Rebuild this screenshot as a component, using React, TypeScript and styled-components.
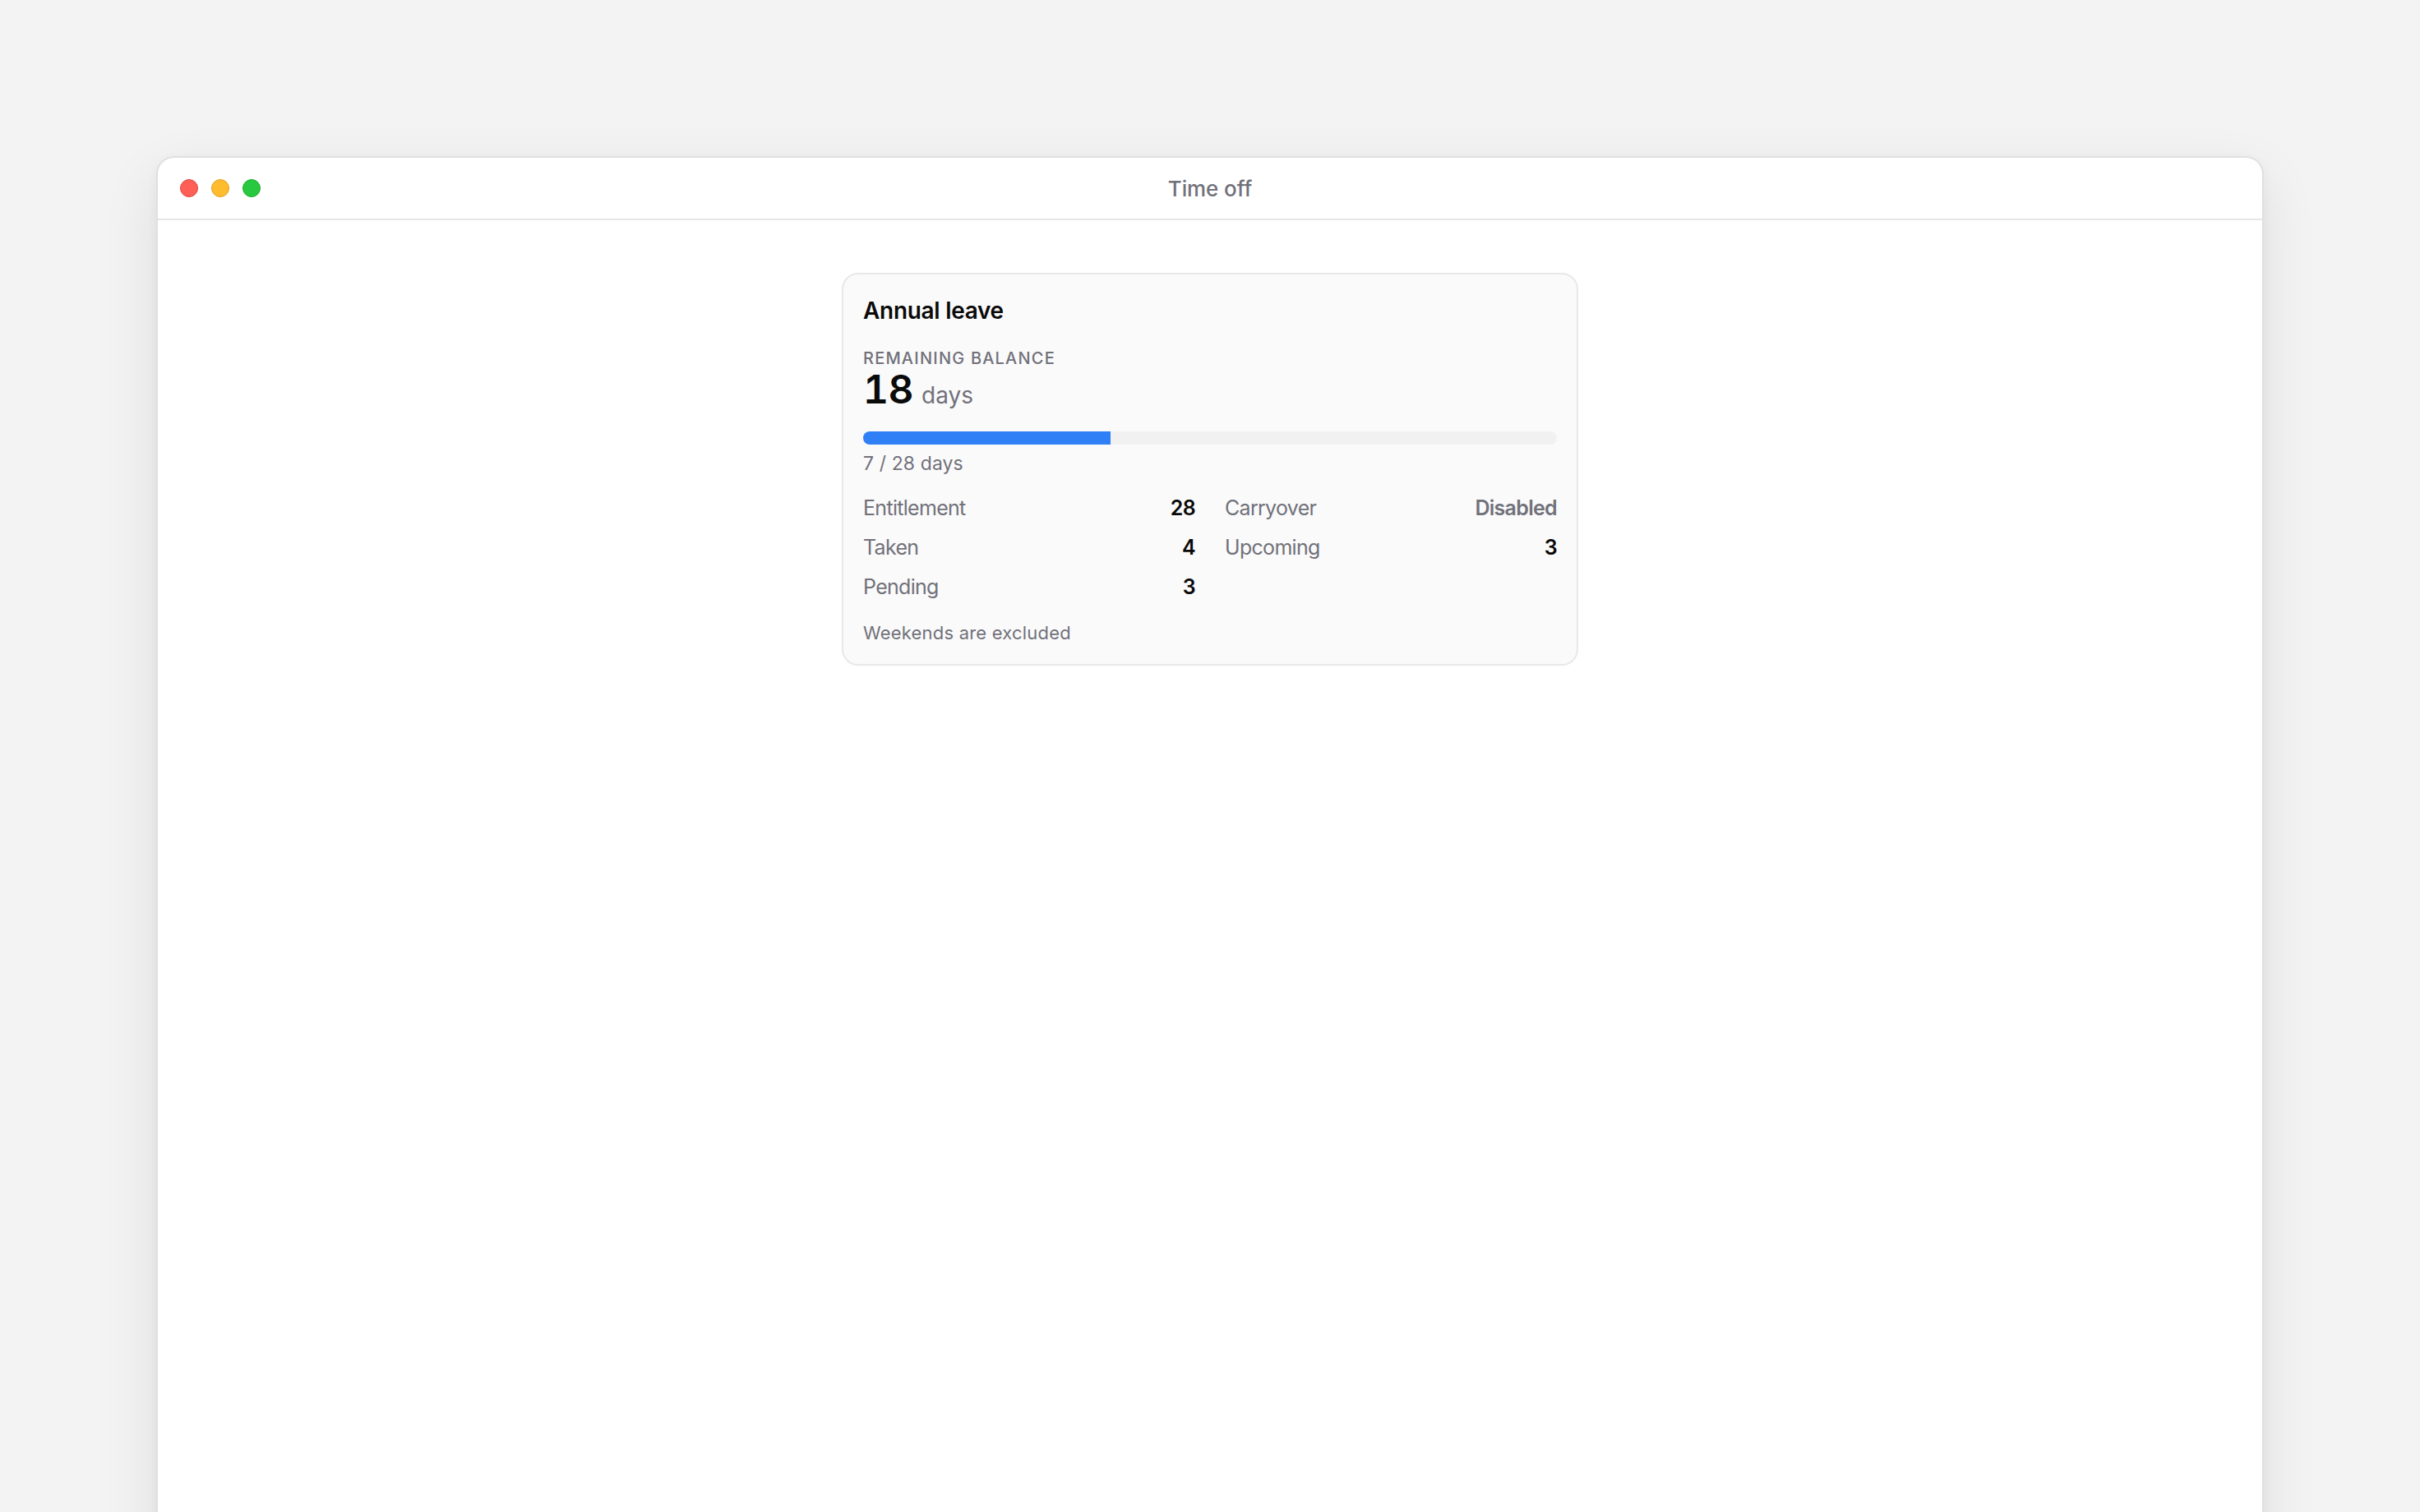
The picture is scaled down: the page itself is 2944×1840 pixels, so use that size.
import styled, { createGlobalStyle } from "styled-components";

const GlobalStyle = createGlobalStyle`
  html, body {
    margin: 0;
    padding: 0;
    background: #f3f3f3;
    overflow: hidden;
  }
  body {
    font-family: Inter, "Noto Sans", "Liberation Sans", sans-serif;
    -webkit-font-smoothing: antialiased;
  }
`;

interface Stat {
  label: string;
  value: string;
  muted?: boolean;
}

const balance = {
  title: "Annual leave",
  entitlement: 28,
  taken: 4,
  pending: 3,
  upcoming: 3,
};

const used = balance.taken + balance.pending + balance.upcoming;
const remaining = balance.entitlement - used;

// left column first, then right column; rendered row by row in a 2-col grid
const stats: (Stat | null)[] = [
  { label: "Entitlement", value: String(balance.entitlement) },
  { label: "Carryover", value: "Disabled", muted: true },
  { label: "Taken", value: String(balance.taken) },
  { label: "Upcoming", value: String(balance.upcoming) },
  { label: "Pending", value: String(balance.pending) },
  null,
];

export default function App() {
  const pct = (used / balance.entitlement) * 100;

  return (
    <>
      <GlobalStyle />
      <Page>
        <Window>
          <TitleBar>
            <Lights>
              <Light color="#ff5f57" edge="#e0443e" />
              <Light color="#febc2e" edge="#dea123" />
              <Light color="#28c840" edge="#1aab29" />
            </Lights>
            <WindowTitle>Time off</WindowTitle>
          </TitleBar>

          <Content>
            <Card>
              <CardTitle>{balance.title}</CardTitle>

              <Eyebrow>Remaining balance</Eyebrow>
              <BalanceLine>
                <BigNumber>{remaining}</BigNumber>
                <Unit>days</Unit>
              </BalanceLine>

              <Track>
                <Fill style={{ width: `${pct}%` }} />
              </Track>
              <Caption>
                {balance.taken + balance.pending} / {balance.entitlement} days
              </Caption>

              <StatGrid>
                {stats.map((s, i) =>
                  s ? (
                    <StatRow key={s.label}>
                      <StatLabel>{s.label}</StatLabel>
                      <StatValue muted={s.muted}>{s.value}</StatValue>
                    </StatRow>
                  ) : (
                    <span key={`empty-${i}`} />
                  )
                )}
              </StatGrid>

              <Footnote>Weekends are excluded</Footnote>
            </Card>
          </Content>
        </Window>
      </Page>
    </>
  );
}

const Page = styled.div`
  min-height: 100vh;
  padding: 190px 190px 0;
  box-sizing: border-box;
`;

const Window = styled.div`
  background: #ffffff;
  border: 2px solid #e0e0e0;
  border-bottom: none;
  border-radius: 22px 22px 0 0;
  min-height: 1700px;
  box-shadow: 0 24px 70px rgba(0, 0, 0, 0.09), 0 4px 14px rgba(0, 0, 0, 0.04);
  overflow: hidden;
`;

const TitleBar = styled.div`
  position: relative;
  height: 74px;
  border-bottom: 2px solid #e6e6e6;
  display: flex;
  align-items: center;
  justify-content: center;
`;

const Lights = styled.div`
  position: absolute;
  left: 27px;
  top: 26px;
  display: flex;
  gap: 16px;
`;

const Light = styled.span<{ color: string; edge: string }>`
  width: 22px;
  height: 22px;
  border-radius: 50%;
  box-sizing: border-box;
  background: ${({ color }) => color};
  border: 1px solid ${({ edge }) => edge};
`;

const WindowTitle = styled.div`
  font-size: 26px;
  font-weight: 500;
  color: #71717a;
  letter-spacing: -0.1px;
`;

const Content = styled.div`
  display: flex;
  justify-content: center;
  padding-top: 64px;
`;

const Card = styled.div`
  width: 896px;
  box-sizing: border-box;
  background: #fafafa;
  border: 2px solid #e8e8e8;
  border-radius: 20px;
  padding: 26px 24px 22px;
  display: flex;
  flex-direction: column;
`;

const CardTitle = styled.h2`
  margin: 0;
  font-size: 28px;
  line-height: 36px;
  font-weight: 600;
  color: #0a0a0a;
  letter-spacing: -0.3px;
`;

const Eyebrow = styled.div`
  margin-top: 26px;
  font-size: 20px;
  line-height: 28px;
  font-weight: 500;
  text-transform: uppercase;
  letter-spacing: 1.2px;
  color: #71717a;
`;

const BalanceLine = styled.div`
  display: flex;
  align-items: baseline;
  gap: 10px;
  height: 48px;
`;

const BigNumber = styled.span`
  font-size: 48px;
  line-height: 48px;
  font-weight: 600;
  color: #0a0a0a;
  font-variant-numeric: tabular-nums;
  letter-spacing: -0.5px;
`;

const Unit = styled.span`
  font-size: 28px;
  line-height: 28px;
  color: #71717a;
`;

const Track = styled.div`
  margin-top: 27px;
  height: 16px;
  border-radius: 8px;
  background: #f1f1f1;
  overflow: hidden;
`;

const Fill = styled.div`
  height: 100%;
  background: #2f7ff7;
`;

const Caption = styled.div`
  margin-top: 7px;
  font-size: 23px;
  line-height: 32px;
  color: #71717a;
  letter-spacing: 0.1px;
`;

const StatGrid = styled.div`
  margin-top: 20px;
  display: grid;
  grid-template-columns: 1fr 1fr;
  column-gap: 36px;
  row-gap: 12px;
`;

const StatRow = styled.div`
  display: flex;
  justify-content: space-between;
  align-items: baseline;
  font-size: 25px;
  line-height: 36px;
  letter-spacing: -0.7px;
`;

const StatLabel = styled.span`
  color: #71717a;
`;

const StatValue = styled.span<{ muted?: boolean }>`
  font-weight: 600;
  color: ${({ muted }) => (muted ? "#71717a" : "#0a0a0a")};
`;

const Footnote = styled.div`
  margin-top: 22px;
  font-size: 22px;
  line-height: 32px;
  color: #71717a;
  letter-spacing: 0.2px;
`;
